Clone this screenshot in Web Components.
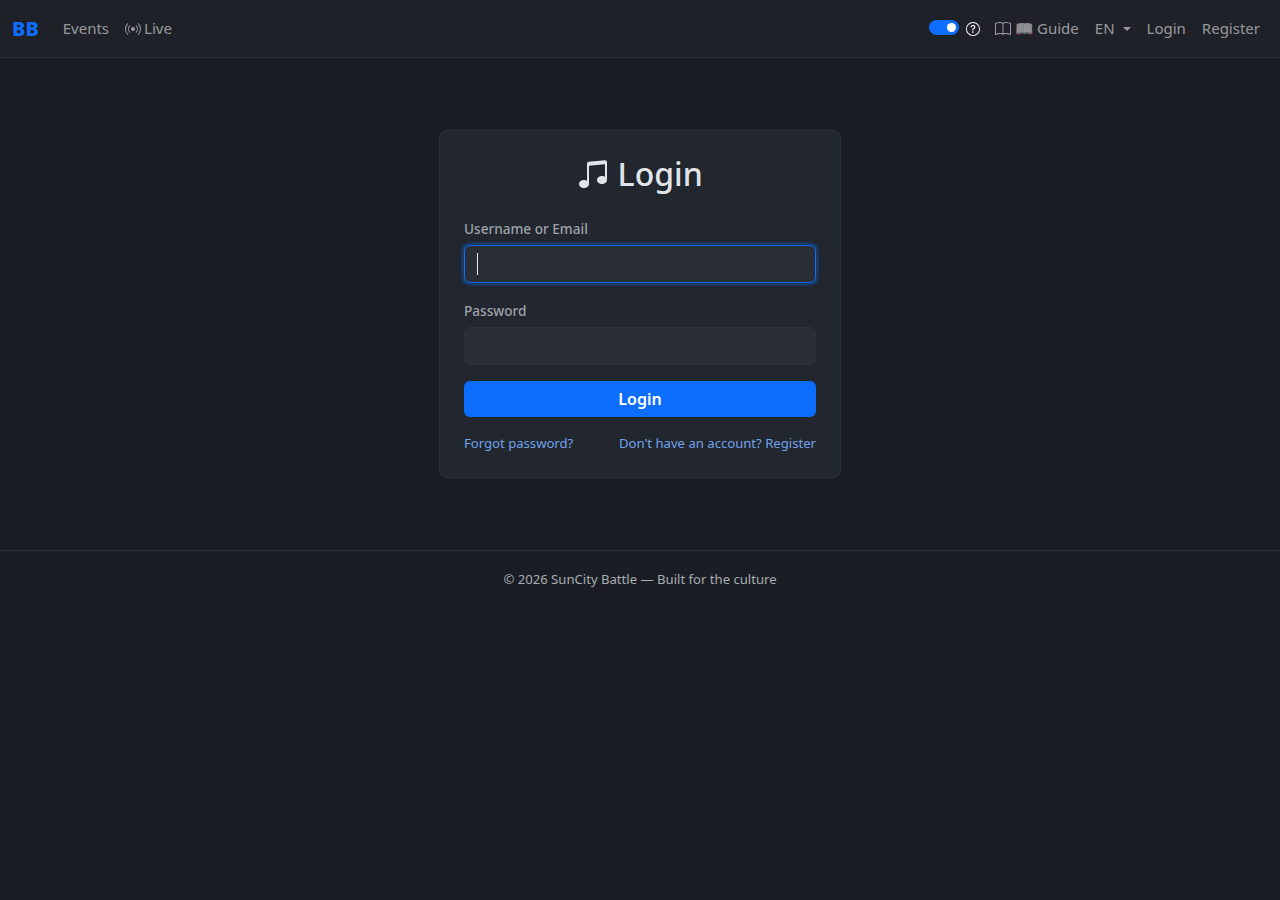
<!DOCTYPE html>
<html lang="en">
<head>
<meta charset="utf-8">
<title>Login</title>
<style>
  html, body { margin: 0; background: #1a1d23; }
  body { font-family: "Noto Sans", sans-serif; min-height: 100vh; }
</style>
</head>
<body>
<app-navbar></app-navbar>
<login-page></login-page>
<app-footer></app-footer>

<script>
const ICONS = {
  broadcast: `<path d="M3.05 3.05a7 7 0 0 0 0 9.9.5.5 0 0 1-.707.707 8 8 0 0 1 0-11.314.5.5 0 0 1 .707.707zm2.122 2.122a4 4 0 0 0 0 5.656.5.5 0 1 1-.708.708 5 5 0 0 1 0-7.072.5.5 0 0 1 .708.708zm5.656-.708a.5.5 0 0 1 .708 0 5 5 0 0 1 0 7.072.5.5 0 1 1-.708-.708 4 4 0 0 0 0-5.656.5.5 0 0 1 0-.708zm2.122-2.12a.5.5 0 0 1 .707 0 8 8 0 0 1 0 11.313.5.5 0 0 1-.707-.707 7 7 0 0 0 0-9.9.5.5 0 0 1 0-.707zM10 8a2 2 0 1 1-4 0 2 2 0 0 1 4 0z"/>`,
  book: `<path d="M1 2.828c.885-.37 2.154-.769 3.388-.893 1.33-.134 2.458.063 3.112.752v9.746c-.935-.53-2.12-.603-3.213-.493-1.18.12-2.37.461-3.287.811V2.828zm7.5-.141c.654-.689 1.782-.886 3.112-.752 1.234.124 2.503.523 3.388.893v9.923c-.918-.35-2.107-.692-3.287-.81-1.094-.111-2.278-.039-3.213.492V2.687zM8 1.783C7.015.936 5.587.81 4.287.94c-1.514.153-3.042.672-3.994 1.105A.5.5 0 0 0 0 2.5v11a.5.5 0 0 0 .707.455c.882-.4 2.303-.881 3.68-1.02 1.409-.142 2.59.087 3.223.877a.5.5 0 0 0 .78 0c.633-.79 1.814-1.019 3.222-.877 1.378.139 2.8.62 3.681 1.02A.5.5 0 0 0 16 13.5v-11a.5.5 0 0 0-.293-.455c-.952-.433-2.48-.952-3.994-1.105C10.413.809 8.985.936 8 1.783z"/>`,
  question: `<path d="M8 15A7 7 0 1 1 8 1a7 7 0 0 1 0 14zm0 1A8 8 0 1 0 8 0a8 8 0 0 0 0 16z"/><path d="M5.255 5.786a.237.237 0 0 0 .241.247h.825c.138 0 .248-.113.266-.25.09-.656.54-1.134 1.342-1.134.686 0 1.314.343 1.314 1.168 0 .635-.374.927-.965 1.371-.673.489-1.206 1.06-1.168 1.987l.003.217a.25.25 0 0 0 .25.246h.811a.25.25 0 0 0 .25-.25v-.105c0-.718.273-.927 1.01-1.486.609-.463 1.244-.977 1.244-2.056 0-1.511-1.276-2.241-2.673-2.241-1.267 0-2.655.59-2.75 2.286zm1.557 5.763c0 .533.425.927 1.01.927.609 0 1.028-.394 1.028-.927 0-.552-.42-.94-1.029-.94-.584 0-1.009.388-1.009.94z"/>`,
  music: `<path d="M6 13c0 1.105-1.12 2-2.5 2S1 14.105 1 13c0-1.104 1.12-2 2.5-2s2.5.896 2.5 2zm9-2c0 1.105-1.12 2-2.5 2s-2.5-.895-2.5-2 1.12-2 2.5-2 2.5.895 2.5 2z"/><path fill-rule="evenodd" d="M14 11V2h1v9h-1zM6 3v10H5V3h1z"/><path d="M5 2.905a1 1 0 0 1 .9-.995l8-.8a1 1 0 0 1 1.1.995V3L5 4V2.905z"/>`
};

class BiIcon extends HTMLElement {
  connectedCallback() {
    const size = this.getAttribute("size") || "16";
    this.attachShadow({mode: "open"}).innerHTML = `
      <style>
        :host { display: inline-flex; vertical-align: -0.125em; }
        svg { display: block; fill: currentColor; }
      </style>
      <svg xmlns="http://www.w3.org/2000/svg" width="${size}" height="${size}" viewBox="0 0 16 16">${ICONS[this.getAttribute("name")]}</svg>`;
  }
}
customElements.define("bi-icon", BiIcon);

class NavLink extends HTMLElement {
  constructor() {
    super();
    this.attachShadow({mode: "open"}).innerHTML = `
      <style>
        :host { display: block; }
        a { display: flex; align-items: center; padding: 8px; color: rgba(255,255,255,.55); text-decoration: none; font-size: 15px; line-height: 22.5px; white-space: nowrap; }
      </style>
      <a href="#"><slot></slot></a>`;
  }
}
customElements.define("nav-link", NavLink);

let navbar_template = document.createElement("template");
navbar_template.innerHTML = `
  <style>
    :host { display: block; background: #1e2128; border-bottom: 1px solid #2d3139; }
    nav { display: flex; align-items: center; justify-content: space-between; height: 57px; padding: 0 12px; }
    .side { display: flex; align-items: center; }
    .brand { color: #0d6efd; font-size: 20px; font-weight: 800; text-decoration: none; margin-right: 16px; line-height: 30px; }
    .switch { width: 30px; height: 15px; border-radius: 8px; background: #0d6efd; display: flex; align-items: center; justify-content: flex-end; padding-right: 3px; box-sizing: border-box; margin-top: -2px; }
    .knob { width: 9px; height: 9px; border-radius: 50%; background: #fff; }
    .help { display: flex; color: #fff; margin: 0 7px; }
    .caret { display: inline-block; width: 0; height: 0; margin-left: 8px; border-top: 4px solid currentColor; border-left: 4px solid transparent; border-right: 4px solid transparent; }
    .gap { margin-right: 3px; }
    .book { margin-right: 4px; }
    .emoji { margin-right: -1px; }
  </style>
  <nav>
    <div class="side">
      <a class="brand" href="#">BB</a>
      <nav-link>Events</nav-link>
      <nav-link><bi-icon name="broadcast" class="gap"></bi-icon>Live</nav-link>
    </div>
    <div class="side">
      <div class="switch"><div class="knob"></div></div>
      <span class="help"><bi-icon name="question" size="14"></bi-icon></span>
      <nav-link><bi-icon name="book" class="book"></bi-icon><span class="emoji">📖</span>&nbsp;Guide</nav-link>
      <nav-link>EN<span class="caret"></span></nav-link>
      <nav-link>Login</nav-link>
      <nav-link>Register</nav-link>
    </div>
  </nav>`;

class AppNavbar extends HTMLElement {
  connectedCallback() {
    this.attachShadow({mode: "open"}).appendChild(navbar_template.content.cloneNode(true));
  }
}
customElements.define("app-navbar", AppNavbar);

class FormField extends HTMLElement {
  connectedCallback() {
    const focused = this.hasAttribute("focused");
    this.attachShadow({mode: "open"}).innerHTML = `
      <style>
        :host { display: block; margin-bottom: 16px; }
        label { display: block; color: #9ea3ab; font-size: 13.6px; line-height: 21px; padding-top: .5px; margin-bottom: 6.5px; font-weight: 500; }
        .wrap { position: relative; }
        input { display: block; box-sizing: border-box; width: 100%; height: 38px; background: #2a2e36; border: 1px solid #2d3139; border-radius: 6px; padding: 6px 12px; outline: none; color: #e9ecef; font: inherit; }
        :host([focused]) input { border-color: #0d6efd; box-shadow: 0 0 0 3px rgba(13,110,253,.25); }
        .cursor { position: absolute; left: 13px; top: 8px; width: 1px; height: 22px; background: #e9ecef; }
      </style>
      <label>${this.getAttribute("label")}</label>
      <div class="wrap">
        <input type="${this.getAttribute("type") || "text"}">
        ${focused ? `<span class="cursor"></span>` : ""}
      </div>`;
  }
}
customElements.define("form-field", FormField);

let card_template = document.createElement("template");
card_template.innerHTML = `
  <style>
    :host { display: block; padding: 72px 0; }
    .card { box-sizing: border-box; width: 402px; margin: 0 auto; padding: 24px; background: #22262e; border: 1px solid #2d3139; border-radius: 8px; }
    h1 { margin: 0 0 24px; text-align: center; color: #e1e4e8; font-size: 32px; font-weight: 500; line-height: 38.4px; }
    button { display: block; width: 100%; height: 36px; border: 0; border-radius: 6px; background: #0d6efd; color: #fff; font: 600 16px "Noto Sans", sans-serif; cursor: pointer; }
    .links { display: flex; justify-content: space-between; padding-top: 17px; margin-bottom: -1px; font-size: 13.12px; line-height: 19.5px; }
    a { color: #72a3ea; text-decoration: none; }
  </style>
  <div class="card">
    <h1><bi-icon name="music" size="32"></bi-icon> Login</h1>
    <form-field label="Username or Email" focused></form-field>
    <form-field label="Password" type="password"></form-field>
    <button type="button">Login</button>
    <div class="links">
      <a href="#">Forgot password?</a>
      <a href="#">Don't have an account? Register</a>
    </div>
  </div>`;

class LoginPage extends HTMLElement {
  connectedCallback() {
    this.attachShadow({mode: "open"}).appendChild(card_template.content.cloneNode(true));
  }
}
customElements.define("login-page", LoginPage);

class AppFooter extends HTMLElement {
  constructor() {
    super();
    this.attachShadow({mode: "open"}).innerHTML = `
      <style>
        :host { display: block; border-top: 1px solid #2d3139; padding: 19px 0; text-align: center; color: #a9adb3; font-size: 13.12px; line-height: 19.5px; }
      </style>
      © 2026 SunCity Battle — Built for the culture`;
  }
}
customElements.define("app-footer", AppFooter);
</script>
</body>
</html>
